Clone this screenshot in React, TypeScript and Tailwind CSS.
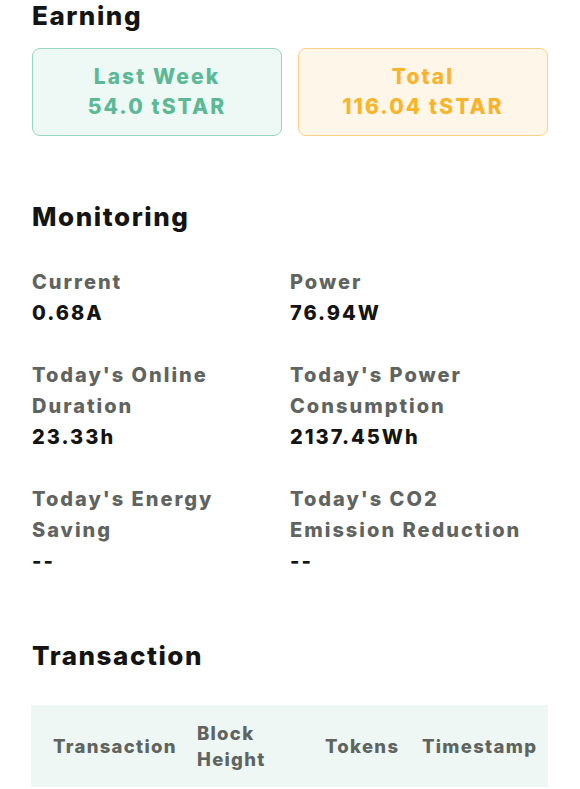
const FONT = { fontFamily: 'Inter, "Noto Sans", sans-serif' }

const STATS = [
    { label: 'Current', value: '0.68A' },
    { label: 'Power', value: '76.94W' },
    { label: "Today's Online Duration", value: '23.33h' },
    { label: "Today's Power Consumption", value: '2137.45Wh' },
    { label: "Today's Energy Saving", value: '--' },
    { label: "Today's CO2 Emission Reduction", value: '--' },
]

const SectionTitle = ({ children }: { children: React.ReactNode }) => (
    <h2 className="text-[26px] leading-[31px] font-extrabold tracking-[0.06em] text-[#141414]">{children}</h2>
)

const EarningCard = ({ title, amount, tone }: { title: string; amount: string; tone: 'green' | 'orange' }) => (
    <div
        className={
            tone === 'green'
                ? 'flex-1 rounded-lg border border-[#97d7c0] bg-[#eef8f4] py-[13px] text-center text-[#5bb995]'
                : 'flex-1 rounded-lg border border-[#fbd183] bg-[#fef6e8] py-[13px] text-center text-[#f8b42a]'
        }
    >
        <p className="text-[21px] leading-[30px] font-extrabold tracking-[0.1em]">{title}</p>
        <p className="text-[21px] leading-[30px] font-extrabold tracking-[0.1em]">{amount}</p>
    </div>
)

const Stat = ({ label, value }: { label: string; value: string }) => (
    <div className="pr-3">
        <p className="text-[20px] leading-[31px] font-extrabold tracking-[0.1em] text-[#5f6461]">{label}</p>
        <p className="text-[20px] leading-[31px] font-extrabold tracking-[0.1em] text-[#141414]">{value}</p>
    </div>
)

export default function App() {
    return (
        <div className="min-h-screen bg-white px-[32px] pb-10" style={FONT}>
            <SectionTitle>Earning</SectionTitle>
            <div className="mt-[17px] flex gap-4">
                <EarningCard title="Last Week" amount="54.0 tSTAR" tone="green" />
                <EarningCard title="Total" amount="116.04 tSTAR" tone="orange" />
            </div>

            <div className="mt-[65px]">
                <SectionTitle>Monitoring</SectionTitle>
                <div className="mt-[35px] grid grid-cols-2 gap-y-[31px]">
                    {STATS.map(s => (
                        <Stat key={s.label} label={s.label} value={s.value} />
                    ))}
                </div>
            </div>

            <div className="mt-[63px]">
                <SectionTitle>Transaction</SectionTitle>
                <div className="-ml-px mt-[34px] grid grid-cols-[144px_128px_97px_1fr] items-center bg-[#eef7f4] py-[15px] pl-[22px] pr-[8px] text-[18.5px] leading-[26px] font-extrabold tracking-[0.07em] text-[#5f6461]">
                    <span className="whitespace-nowrap">Transaction</span>
                    <span>Block<br />Height</span>
                    <span className="whitespace-nowrap">Tokens</span>
                    <span className="whitespace-nowrap">Timestamp</span>
                </div>
            </div>
        </div>
    )
}
